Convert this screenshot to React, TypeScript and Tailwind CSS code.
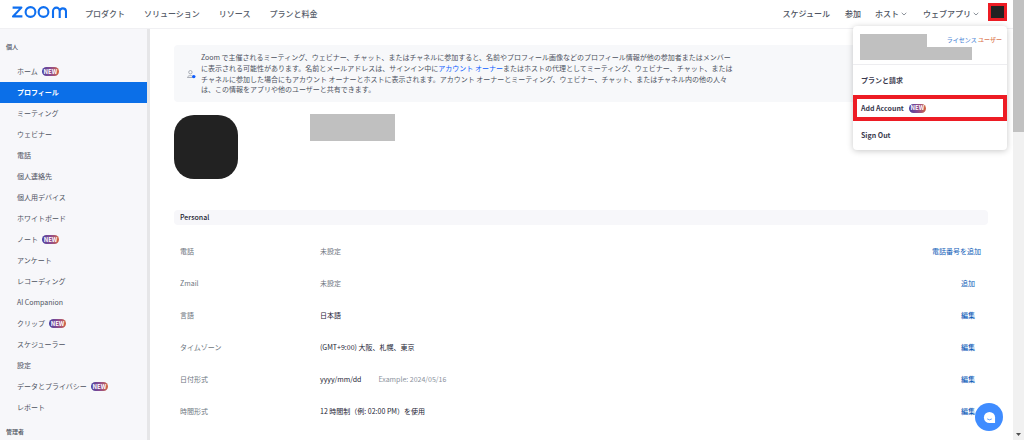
import React from "react";

const font = { fontFamily: '"Noto Sans CJK JP", "Noto Sans", sans-serif' };

function NewBadge() {
  return (
    <span className="inline-flex h-[9px] w-[17px] items-center justify-center rounded-full bg-gradient-to-r from-[#4a3f9f] via-[#8a4a90] to-[#d2603a] text-[6px] font-bold leading-none text-white">
      NEW
    </span>
  );
}

const Chevron = () => (
  <svg width="6" height="4" viewBox="0 0 6 4" fill="none" className="mt-px">
    <path d="M0.7 0.8 L3 3 L5.3 0.8" stroke="#6e7680" strokeWidth="0.8" />
  </svg>
);

const sideItems: { t: string; n?: boolean; a?: boolean }[] = [
  { t: "ホーム", n: true },
  { t: "プロフィール", a: true },
  { t: "ミーティング" },
  { t: "ウェビナー" },
  { t: "電話" },
  { t: "個人連絡先" },
  { t: "個人用デバイス" },
  { t: "ホワイトボード" },
  { t: "ノート", n: true },
  { t: "アンケート" },
  { t: "レコーディング" },
  { t: "AI Companion" },
  { t: "クリップ", n: true },
  { t: "スケジューラー" },
  { t: "設定" },
  { t: "データとプライバシー", n: true },
  { t: "レポート" },
];

const rows: { l: string; v: string; c: string; e?: string; act: string }[] = [
  { l: "電話", v: "未設定", c: "text-[#6e7680]", act: "電話番号を追加" },
  { l: "Zmail", v: "未設定", c: "text-[#6e7680]", act: "追加" },
  { l: "言語", v: "日本語", c: "text-[#232333]", act: "編集" },
  { l: "タイムゾーン", v: "(GMT+9:00) 大阪、札幌、東京", c: "text-[#232333]", act: "編集" },
  { l: "日付形式", v: "yyyy/mm/dd", c: "text-[#232333]", e: "Example: 2024/05/16", act: "編集" },
  { l: "時間形式", v: "12 時間制（例: 02:00 PM）を使用", c: "text-[#232333]", act: "編集" },
];

export default function App() {
  return (
    <div style={font} className="relative flex h-[440px] w-[1024px] overflow-hidden bg-white">
      <div className="relative flex w-[1013px] flex-col">
        {/* Header */}
        <header className="flex h-[29px] shrink-0 items-center border-b border-[#f0f0f3] bg-white pb-px pl-[12px] pr-[6px]">
          <svg width="55" height="12" viewBox="0 0 55 12" className="mb-[4px] shrink-0">
            <g fill="none" stroke="#0f6ff0" strokeWidth="2.1">
              <path d="M0.6 1.6 H9.4 L1 10.4 H10.4" strokeLinejoin="round" />
              <circle cx="18.5" cy="6" r="4.9" />
              <circle cx="31.5" cy="6" r="4.9" />
              <path d="M41 12 V5 a3.2 3.2 0 0 1 6.7 0 V12 M47.7 5 a3.2 3.2 0 0 1 6.3 0 V12" />
            </g>
          </svg>
          <nav className="ml-[18px] flex gap-[19px] text-[8px] font-medium text-[#555b68]">
            <span>プロダクト</span>
            <span>ソリューション</span>
            <span>リソース</span>
            <span>プランと料金</span>
          </nav>
          <div className="ml-auto flex items-center text-[8px] font-medium text-[#4d5260]">
            <span>スケジュール</span>
            <span className="ml-[15px]">参加</span>
            <span className="ml-[14px] flex items-center gap-[2px]">ホスト<Chevron /></span>
            <span className="ml-[16px] flex items-center gap-[2px]">ウェブアプリ<Chevron /></span>
            <span className="mb-[3px] ml-[9px] box-border h-[18px] w-[19px] border-[3px] border-[#ed1c24] bg-[#222]" />
          </div>
        </header>

        <div className="flex min-h-0 flex-1">
          {/* Sidebar */}
          <aside className="w-[150px] shrink-0 border-r-[3px] border-[#e6e6e8] bg-[#f7f7fa] pt-[13px]">
            <div className="h-[10px] pl-[6px] text-[6px] font-medium leading-[10px] text-[#4d5260]">個人</div>
            <ul className="mt-[9px] text-[7px]">
              {sideItems.map((s) => (
                <li
                  key={s.t}
                  className={
                    "flex h-[21px] items-center gap-[4px] pl-[17px] " +
                    (s.a ? "bg-[#0b6fe8] font-bold text-white" : "text-[#4d5260]")
                  }
                >
                  {s.t}
                  {s.n && <NewBadge />}
                </li>
              ))}
            </ul>
            <div className="mt-[9px] pl-[6px] text-[6px] font-medium leading-[10px] text-[#4d5260]">管理者</div>
          </aside>

          {/* Main */}
          <main className="min-w-0 flex-1 pl-[24px] pr-[25px] pt-[16px]">
            <div className="flex h-[57px] items-center rounded-[4px] bg-[#f7f8fa] pl-[13px]">
              <svg width="9" height="9" viewBox="0 0 9 9" className="mr-[5px] mt-[2px] shrink-0">
                <circle cx="3.4" cy="2.2" r="1.7" fill="none" stroke="#8a919c" strokeWidth="0.7" />
                <path d="M0.5 7.5 C0.7 5 6 5 6.3 7.5 Z" fill="none" stroke="#8a919c" strokeWidth="0.7" />
                <circle cx="6.8" cy="6.6" r="1.7" fill="#0b5cff" />
              </svg>
              <p className="whitespace-nowrap text-[7px] leading-[10.6px] text-[#4d5260]">
                Zoom で主催されるミーティング、ウェビナー、チャット、またはチャネルに参加すると、名前やプロフィール画像などのプロフィール情報が他の参加者またはメンバー
                <br />
                に表示される可能性があります。名前とメールアドレスは、サインイン中に
                <span className="text-[#0b5cff]">アカウント オーナー</span>
                またはホストの代理としてミーティング、ウェビナー、チャット、または
                <br />
                チャネルに参加した場合にもアカウント オーナーとホストに表示されます。アカウント オーナーとミーティング、ウェビナー、チャット、またはチャネル内の他の人々
                <br />
                は、この情報をアプリや他のユーザーと共有できます。
              </p>
            </div>

            <div className="mt-[13px] flex h-[64px] items-start">
              <div className="h-[64px] w-[64px] rounded-[20px] bg-[#222]" />
              <div className="ml-[72px] mt-[-1px] h-[27px] w-[85px] bg-[#c0c0c0]" />
            </div>

            <div className="mt-[31px] flex h-[15px] items-center rounded-[4px] bg-[#f7f7fa] pl-[6px] text-[7px] font-medium text-[#232333]">
              Personal
            </div>

            <div className="mt-[10px]">
              {rows.map((r) => (
                <div
                  key={r.l}
                  className={
                    "grid h-[32px] grid-cols-[140px_1fr_auto] items-center pl-[6px] text-[7px] " +
                    (r.act === "電話番号を追加" ? "pr-[7px]" : "pr-[13px]")
                  }
                >
                  <span className="text-[#6e7680]">{r.l}</span>
                  <span className={r.c}>
                    {r.v}
                    {r.e && <span className="ml-[17px] text-[#8a919c]">{r.e}</span>}
                  </span>
                  <span className={"text-[#0e5db8] " + (r.act === "編集" ? "font-medium" : "")}>{r.act}</span>
                </div>
              ))}
            </div>
          </main>
        </div>

        {/* Account dropdown */}
        <div className="absolute left-[853px] top-[26px] flex h-[124px] w-[154px] flex-col rounded-[4px] bg-white text-[7px] font-bold text-[#39394d] shadow-[0_1px_6px_rgba(0,0,0,0.22)]">
          <div className="relative h-[39px] border-b border-[#ededf0]">
            <div className="absolute left-[7px] top-[8px] h-[13px] w-[67px] bg-[#c0c0c0]" />
            <div className="absolute left-[7px] top-[21px] h-[13px] w-[112px] bg-[#c0c0c0]" />
            <span className="absolute right-[5px] top-[9px] text-[6px] font-medium leading-[10px]">
              <span className="text-[#5b8fd9]">ライセンス</span> <span className="text-[#dd7a55]">ユーザー</span>
            </span>
          </div>
          <div className="flex h-[30px] items-center pl-[8px]">プランと請求</div>
          <div className="box-border flex h-[26px] items-center gap-[5px] border-[4px] border-[#ed1c24] pl-[4px]">
            Add Account <NewBadge />
          </div>
          <div className="flex flex-1 items-center pl-[8px]">Sign Out</div>
        </div>

        {/* Chat bubble */}
        <div className="absolute bottom-[9px] left-[975px] flex h-[28px] w-[28px] items-center justify-center rounded-full bg-[#3f8cff]">
          <svg width="13" height="13" viewBox="0 0 14 14">
            <path d="M7 1 a6 6 0 1 0 0 12 H13 V7 A6 6 0 0 0 7 1 Z" fill="white" />
            <path d="M4.5 8.5 Q7 10.5 9.5 8.5" fill="none" stroke="#3f8cff" strokeWidth="0.9" />
          </svg>
        </div>
      </div>

      {/* Page scrollbar */}
      <div className="flex w-[11px] shrink-0 flex-col bg-[#f1f1f1]">
        <div className="h-[132px] bg-[#c1c1c1]" />
        <div className="mt-auto flex h-[11px] items-center justify-center">
          <svg width="5" height="3" viewBox="0 0 5 3"><path d="M0 0 H5 L2.5 3 Z" fill="#505050" /></svg>
        </div>
      </div>
    </div>
  );
}
